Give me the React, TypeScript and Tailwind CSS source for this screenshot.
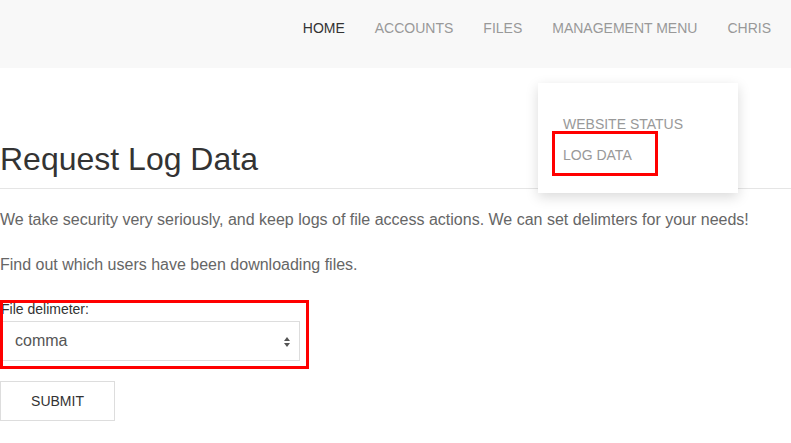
import { useState } from 'react';

const navItems = ['HOME', 'ACCOUNTS', 'FILES', 'MANAGEMENT MENU', 'CHRIS'];

export default function App() {
  const [delim, setDelim] = useState('comma');

  return (
    <div className="relative min-h-[443px] bg-white text-[#333]" style={{ fontFamily: '"Liberation Sans", Arial, sans-serif' }}>
      <nav className="flex h-[68px] items-start justify-end bg-[#f8f8f8] pr-[5px] pt-[18px]">
        {navItems.map((item, i) => (
          <a
            key={item}
            className={`px-[15px] text-[14px] leading-[20px] ${i === 0 ? 'text-[#333]' : 'text-[#999]'}`}
          >
            {item}
          </a>
        ))}
      </nav>

      {/* dropdown for management menu */}
      <div className="absolute left-[538px] top-[83px] w-[200px] bg-white pb-[22px] pt-[26px] shadow-[0_4px_12px_rgba(0,0,0,0.15)]">
        <div className="px-[25px] py-[5px] text-[14px] leading-[20px] text-[#999]">WEBSITE STATUS</div>
        <div className="relative px-[25px] py-[6px] text-[14px] leading-[20px] text-[#999]">
          LOG DATA
          <span className="absolute left-[14px] top-[-8px] h-[45px] w-[106px] border-[3px] border-[#ff0000]" />
        </div>
      </div>

      <main className="pt-[72px]">
        <h1 className="pb-[10px] text-[32px] leading-[38px] font-normal text-[#333]">Request Log Data</h1>
        <hr className="border-t border-[#e5e5e5]" />
        <p className="mt-[19px] text-[16px] leading-[24px] text-[#666]">
          We take security very seriously, and keep logs of file access actions. We can set delimters for your needs!
        </p>
        <p className="mt-[21px] text-[16px] leading-[24px] text-[#666]">Find out which users have been downloading files.</p>

        <form className="relative mt-[24px]" onSubmit={(e) => e.preventDefault()}>
          <label className="block pl-[1px] text-[14px] leading-[16px] text-[#333]">File delimeter:</label>
          <div className="relative mt-[4px] h-[40px] w-[300px] border border-[#ddd]">
            <select
              value={delim}
              onChange={(e) => setDelim(e.target.value)}
              className="h-full w-full appearance-none bg-white px-[14px] text-[16px] text-[#555] outline-none"
            >
              <option value="comma">comma</option>
              <option value="tab">tab</option>
              <option value="semicolon">semicolon</option>
            </select>
            <svg className="pointer-events-none absolute right-[9px] top-[15px]" width="6" height="10" viewBox="0 0 6 10">
              <path d="M3 0 L6 4 L0 4 Z M0 6 L6 6 L3 10 Z" fill="#555" />
            </svg>
          </div>
          {/* highlight box */}
          <span className="pointer-events-none absolute left-0 top-[-1px] h-[69px] w-[309px] border-[3px] border-[#ff0000]" />
          <button
            type="submit"
            className="mt-[20px] h-[40px] w-[115px] border border-[#ddd] bg-white text-[14px] text-[#333]"
          >
            SUBMIT
          </button>
        </form>
      </main>
    </div>
  );
}
